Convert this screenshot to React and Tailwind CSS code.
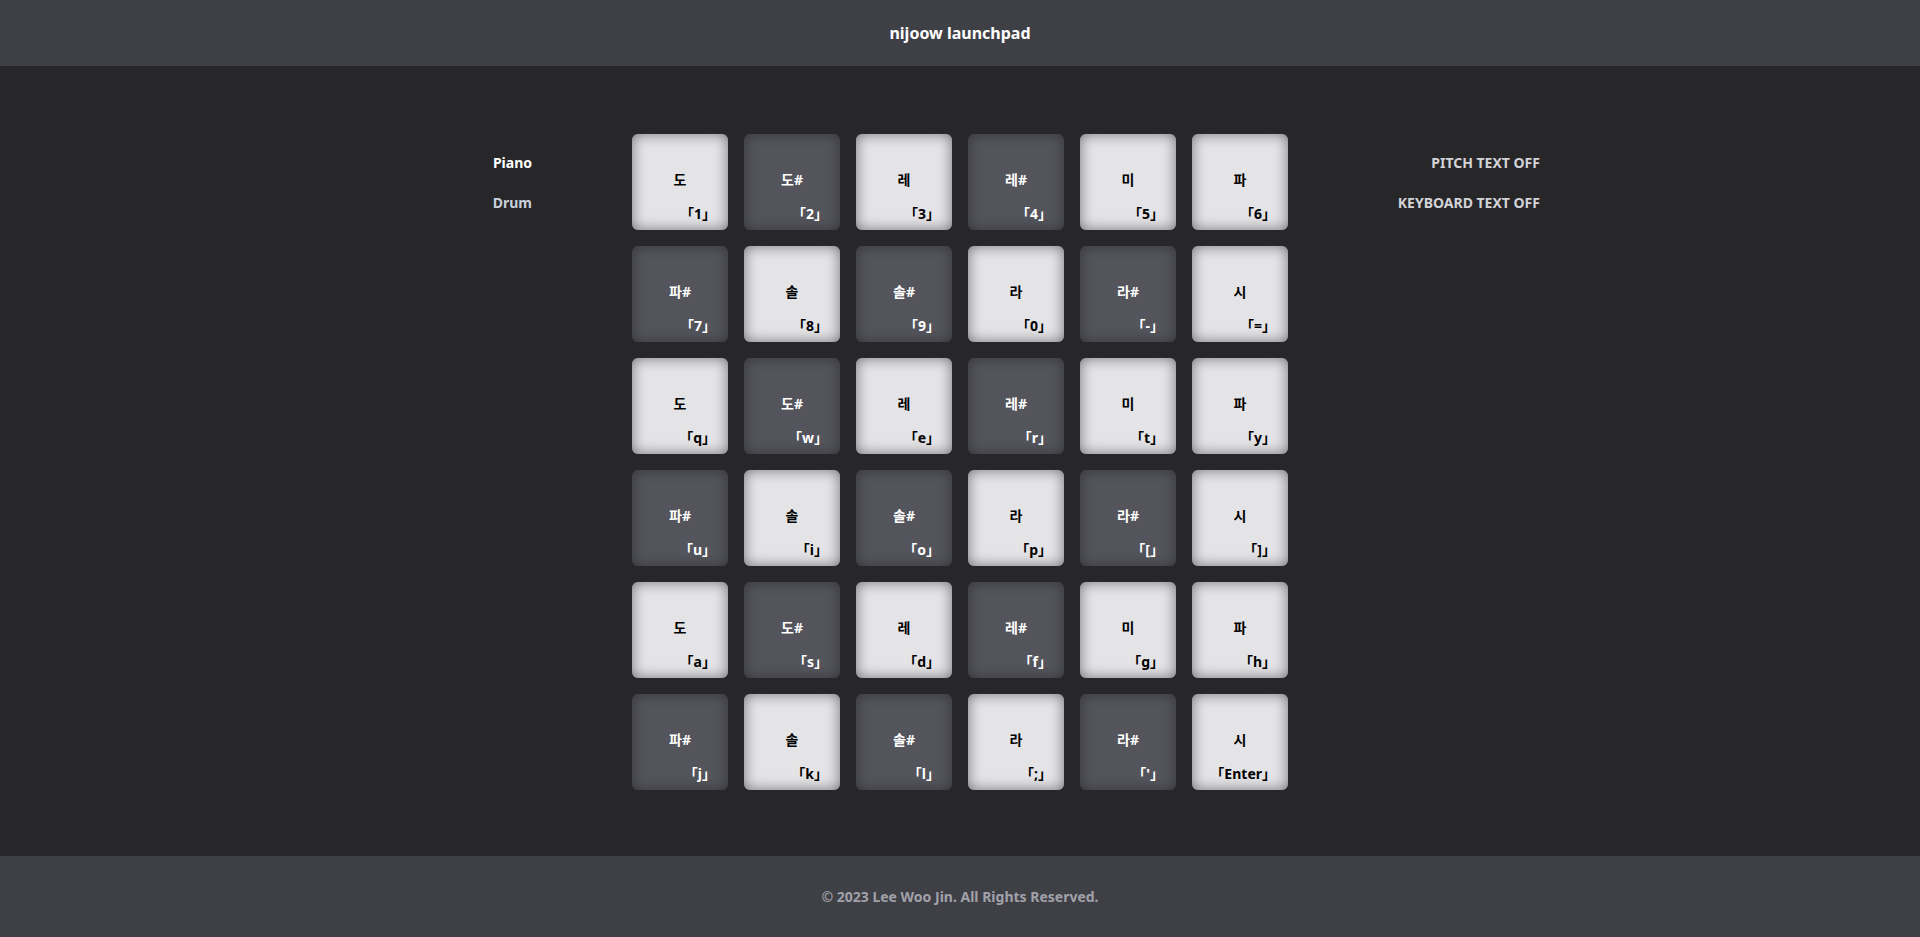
const rowA = [
  { pitch: '도', light: true },
  { pitch: '도#', light: false },
  { pitch: '레', light: true },
  { pitch: '레#', light: false },
  { pitch: '미', light: true },
  { pitch: '파', light: true },
];

const rowB = [
  { pitch: '파#', light: false },
  { pitch: '솔', light: true },
  { pitch: '솔#', light: false },
  { pitch: '라', light: true },
  { pitch: '라#', light: false },
  { pitch: '시', light: true },
];

const keyRows = [
  ['1', '2', '3', '4', '5', '6'],
  ['7', '8', '9', '0', '-', '='],
  ['q', 'w', 'e', 'r', 't', 'y'],
  ['u', 'i', 'o', 'p', '[', ']'],
  ['a', 's', 'd', 'f', 'g', 'h'],
  ['j', 'k', 'l', ';', "'", 'Enter'],
];

const pads = keyRows.flatMap((keys, r) =>
  keys.map((key, c) => ({ ...(r % 2 === 0 ? rowA : rowB)[c], key }))
);

const Pad = ({ pitch, keyName, light }) => (
  <button
    className={`relative w-[96px] h-[96px] rounded-[6px] ${
      light
        ? 'bg-[#e4e4e7] text-black shadow-[inset_0_0_14px_rgba(0,0,0,0.5)]'
        : 'bg-[#54545c] text-white shadow-[inset_0_0_14px_rgba(0,0,0,0.38)]'
    }`}
  >
    <span className="absolute left-0 right-0 top-[36px] text-center text-[14px] font-bold leading-[20px]">
      {pitch}
    </span>
    <span className="absolute right-[12px] bottom-[7px] text-[14px] font-bold leading-[18px]">
      「{keyName}」
    </span>
  </button>
);

export default function App() {
  return (
    <div className="min-h-[937px] flex flex-col bg-[#27272a] font-['Noto_Sans','Noto_Sans_CJK_KR',sans-serif]">
      <header className="h-[66px] flex items-center justify-center bg-[#3f3f46]">
        <h1 className="text-[16px] font-bold text-white">nijoow launchpad</h1>
      </header>

      <main className="flex-1 flex justify-center pt-[68px] pb-[66px]">
        {/* Instrument select */}
        <div className="w-[252px] flex flex-col items-end pr-[100px] pt-[19px] gap-[20px]">
          <span className="text-[14px] leading-[20px] font-bold text-white">Piano</span>
          <span className="text-[14px] leading-[20px] font-bold text-[#c9d1dc]">Drum</span>
        </div>

        {/* Pads */}
        <div className="grid grid-cols-6 gap-[16px]">
          {pads.map((p, i) => (
            <Pad key={i} pitch={p.pitch} keyName={p.key} light={p.light} />
          ))}
        </div>

        {/* Toggles */}
        <div className="w-[252px] flex flex-col items-end pt-[19px] gap-[20px]">
          <span className="text-[14px] leading-[20px] font-bold text-[#d4d4d8]">PITCH TEXT OFF</span>
          <span className="text-[14px] leading-[20px] font-bold text-[#d4d4d8]">KEYBOARD TEXT OFF</span>
        </div>
      </main>

      <footer className="h-[81px] flex items-center justify-center bg-[#3f3f46]">
        <p className="text-[14px] font-bold text-[#a1a1aa]">© 2023 Lee Woo Jin. All Rights Reserved.</p>
      </footer>
    </div>
  );
}
